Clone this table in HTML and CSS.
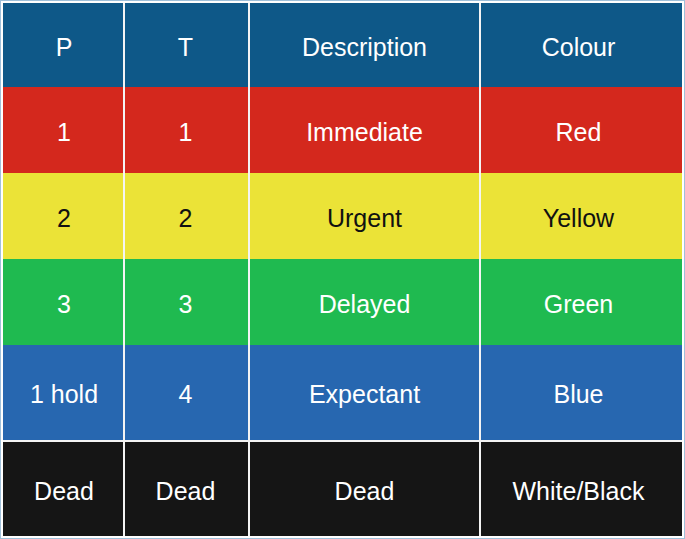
FILE: index.html
```html
<!DOCTYPE html>
<html>
<head>
<meta charset="utf-8">
<link rel="stylesheet" href="styles.css">
</head>
<body>
<div class="frame">
  <div class="grid">
    <div class="row head"><div class="c">P</div><div class="c">T</div><div class="c">Description</div><div class="c">Colour</div></div>
    <div class="row red"><div class="c">1</div><div class="c">1</div><div class="c">Immediate</div><div class="c">Red</div></div>
    <div class="row yellow"><div class="c">2</div><div class="c">2</div><div class="c">Urgent</div><div class="c">Yellow</div></div>
    <div class="row green"><div class="c">3</div><div class="c">3</div><div class="c">Delayed</div><div class="c">Green</div></div>
    <div class="row blue"><div class="c">1 hold</div><div class="c">4</div><div class="c">Expectant</div><div class="c">Blue</div></div>
    <div class="row black"><div class="c">Dead</div><div class="c">Dead</div><div class="c">Dead</div><div class="c">White/Black</div></div>
  </div>
</div>
</body>
</html>
```
FILE: styles.css
```css
html, body { margin: 0; padding: 0; background: #ffffff; }
.frame {
  width: 685px;
  height: 539px;
  box-sizing: border-box;
  border: 1px solid #9fc0da;
  padding: 2px;
  background: #ffffff;
}
.grid {
  display: flex;
  flex-direction: column;
  height: 533px;
  font-family: "Liberation Sans", Arial, sans-serif;
  font-size: 25px;
  color: #ffffff;
}
.row {
  display: grid;
  grid-template-columns: 122px 125px 231px 1fr;
}
.c {
  display: flex;
  align-items: center;
  justify-content: center;
  padding-top: 4px;
  border-right: 2px solid #f4f4f4;
}
.c:first-child { padding-left: 2px; }
.c:nth-child(2) { padding-right: 2px; }
.c:last-child { border-right: none; padding-right: 6px; }
.head { height: 84px; background: #0e5888; }
.red { height: 86px; background: #d4281d; }
.yellow { height: 86px; background: #ebe337; color: #111111; }
.green { height: 86px; background: #1fba50; }
.blue { height: 95px; background: #2767b0; border-bottom: 2px solid #f4f4f4; }
.black { flex: 1; background: #151515; }
```
